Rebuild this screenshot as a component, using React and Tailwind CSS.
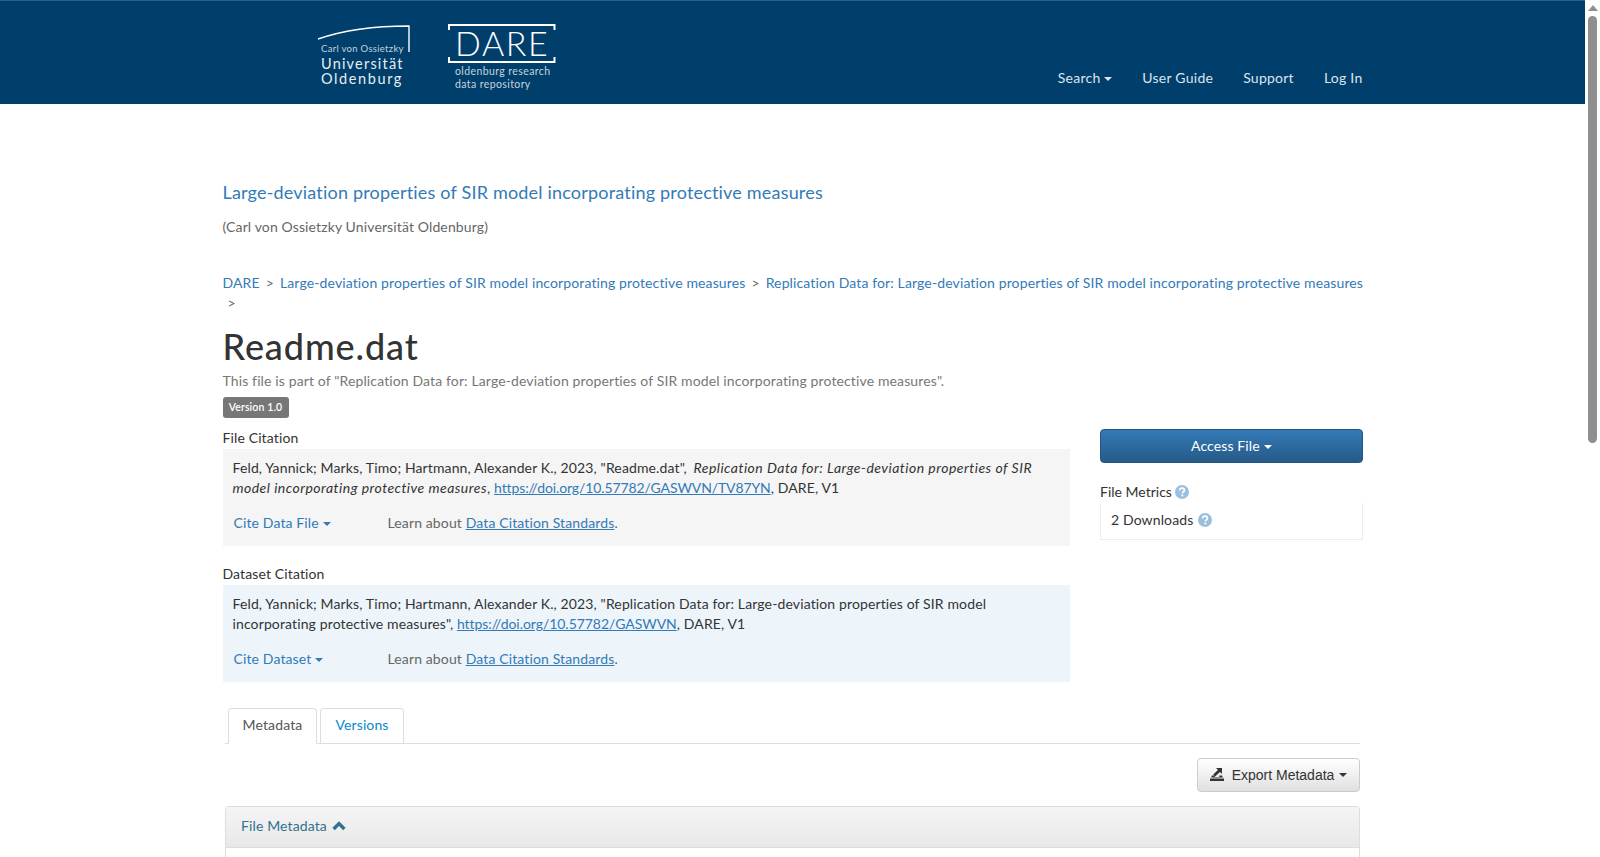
import React from "react";

const Caret = ({ className = "" }) => (
  <span className={"inline-block w-0 h-0 align-middle border-x-[4px] border-x-transparent border-t-[4px] border-t-current " + className} />
);

const Help = ({ className = "" }) => (
  <svg width="14" height="14" viewBox="0 0 14 14" className={"shrink-0 " + className}>
    <circle cx="7" cy="7" r="7" fill="#9bbfdf" />
    <path d="M4.6 5.4C4.7 3.9 5.7 3.2 7 3.2c1.4 0 2.4.8 2.4 2 0 1-.6 1.5-1.2 1.9-.5.3-.7.6-.7 1.2" fill="none" stroke="#fff" strokeWidth="1.7" />
    <rect x="6.4" y="9.4" width="1.9" height="1.9" fill="#fff" />
  </svg>
);

function Logo() {
  return (
    <svg width="245" height="72" viewBox="0 0 245 72" className="block">
      <g fill="none" stroke="#fff">
        <path d="M1 16 C 30 6, 60 3, 92 3 L92 29" strokeWidth="1.4" />
        <path d="M132 7 V2 H237.5 V7 M132 34 V39 H237.5 V34" strokeWidth="2" />
      </g>
      <g fill="#e8eef3" fontFamily="Lato, sans-serif">
        <text x="4" y="29" fontSize="9.5" letterSpacing="0.3" fillOpacity="0.85">Carl von Ossietzky</text>
        <text x="4" y="46" fontSize="14.5" letterSpacing="1.2">Universität</text>
        <text x="4" y="61" fontSize="14.5" letterSpacing="1.6">Oldenburg</text>
        <text x="138" y="33" fontSize="34" letterSpacing="1.6" fill="#fff" fontWeight="300">DARE</text>
        <text x="138" y="52" fontSize="10.5" letterSpacing="0.4" fillOpacity="0.85">oldenburg research</text>
        <text x="138" y="65" fontSize="10.5" letterSpacing="0.4" fillOpacity="0.85">data repository</text>
      </g>
    </svg>
  );
}

function Citation({ bg, label, text, cite }) {
  return (
    <div>
      <div className="h-[21px] text-[#333]">{label}</div>
      <div className={"h-[97px] pt-[9px] px-[10px] text-[#333] " + bg}>
        <div>{text}</div>
        <div className="flex mt-[15px]">
          <a className="w-[155px] pl-[1px] text-[#337ab7]">{cite} <Caret /></a>
          <span className="text-[#666]">Learn about <a className="text-[#337ab7] underline">Data Citation Standards</a>.</span>
        </div>
      </div>
    </div>
  );
}

export default function App() {
  return (
    <div className="flex h-[857px] overflow-hidden bg-white text-[14px] leading-[20px] tracking-[0.009em] font-['Lato','Noto_Sans',sans-serif]">
      <div className="w-[1585px] shrink-0 overflow-hidden">
        <header className="h-[104px] bg-[#003f6b] border-t border-t-[#2a6284]">
          <div className="w-[1170px] mx-auto px-[15px] flex justify-between">
            <div className="ml-[94px] mt-[22px]"><Logo /></div>
            <nav className="flex gap-[30px] mt-[67px] h-[20px] text-[#dde5eb] tracking-[0.018em]">
              <a>Search <Caret /></a>
              <a>User Guide</a>
              <a>Support</a>
              <a>Log In</a>
            </nav>
          </div>
        </header>

        <main className="w-[1170px] mx-auto px-[15px]">
          <a className="block mt-[78px] text-[18px] tracking-[0.0105em] text-[#337ab7]">Large-deviation properties of SIR model incorporating protective measures</a>
          <p className="mt-[15px] text-[#666]">(Carl von Ossietzky Universität Oldenburg)</p>

          <div className="mt-[36px]">
            <div className="flex whitespace-nowrap text-[#337ab7]">
              <a>DARE</a><span className="mx-[6px] text-[#666]">&gt;</span>
              <a>Large-deviation properties of SIR model incorporating protective measures</a><span className="mx-[6px] text-[#666]">&gt;</span>
              <a>Replication Data for: Large-deviation properties of SIR model incorporating protective measures</a>
            </div>
            <div className="pl-[5px] text-[#666]">&gt;</div>
          </div>

          <h1 className="mt-[13px] text-[36px] leading-[40px] font-medium tracking-[0.9px] text-[#333]">Readme.dat</h1>
          <p className="mt-[5px] text-[#777]">This file is part of "Replication Data for: Large-deviation properties of SIR model incorporating protective measures".</p>
          <span className="block w-[66px] h-[21px] mt-[6px] rounded-[3px] bg-[#777] text-white text-[10.5px] leading-[20px] font-semibold text-center">Version 1.0</span>

          <div className="flex gap-[30px] mt-[10px]">
            <div className="w-[847.5px] flex flex-col gap-[18px]">
              <Citation
                bg="bg-[#f5f5f5]"
                label="File Citation"
                cite="Cite Data File"
                text={<>Feld, Yannick; Marks, Timo; Hartmann, Alexander K., 2023, "Readme.dat", <em className="ml-[3px] tracking-[0.034em]">Replication Data for: Large-deviation properties of SIR<br />model incorporating protective measures</em>, <a className="text-[#337ab7] underline tracking-[-0.008em]">https://doi.org/10.57782/GASWVN/TV87YN</a>, DARE, V1</>}
              />
              <Citation
                bg="bg-[#edf5fb]"
                label="Dataset Citation"
                cite="Cite Dataset"
                text={<>Feld, Yannick; Marks, Timo; Hartmann, Alexander K., 2023, "Replication Data for: Large-deviation properties of SIR model<br />incorporating protective measures", <a className="text-[#337ab7] underline tracking-[-0.003em]">https://doi.org/10.57782/GASWVN</a>, DARE, V1</>}
              />
            </div>
            <div className="w-[262.5px] pt-[1px]">
              <button className="block w-full h-[34px] rounded-[4px] border border-[#245580] bg-gradient-to-b from-[#337ab7] to-[#265a88] text-white text-center">Access File <Caret /></button>
              <div className="mt-[19px] flex items-center h-[20px] text-[#333] tracking-normal">File Metrics <Help className="ml-[3px] -mt-[1px]" /></div>
              <div className="mt-[1px] h-[37px] pb-[3px] flex items-center px-[10px] border-x border-b border-[#eeeeee] text-[#333]">2 Downloads <Help className="ml-[5px]" /></div>
            </div>
          </div>

          <div className="mt-[26px] mx-[2.5px] flex gap-[3px] h-[36px] border-b border-[#dddddd] pl-[3px]">
            <a className="w-[89px] h-[36px] pb-[2px] flex items-center justify-center bg-white border border-[#dddddd] border-b-white rounded-t-[4px] text-[#555]">Metadata</a>
            <a className="w-[84px] h-[35px] pb-[2px] flex items-center justify-center border border-[#dddddd] border-b-0 rounded-t-[4px] text-[#0a89cc]">Versions</a>
          </div>

          <div className="mx-[2.5px] mt-[14px] flex justify-end">
            <button className="w-[163px] h-[34px] flex items-center justify-center rounded-[4px] border border-[#cccccc] bg-gradient-to-b from-white to-[#e0e0e0] text-[#333] tracking-normal font-['Liberation_Sans',sans-serif]">
              <svg width="14" height="14" viewBox="0 0 14 14" className="mr-[8px] -mt-[2px] fill-[#333]">
                <path d="M0 11.5h14V14H0zM2 8.6h3.2l-.5 1.4H9.3V8.6H12l1 2H1zM3.2 7.6 8 3 6 1h6v6L10 5 5.3 9.2z" />
              </svg>
              Export Metadata <Caret className="ml-[5px]" />
            </button>
          </div>

          <section className="mx-[2.5px] mt-[14px] h-[60px] border-x border-t border-[#dddddd] rounded-t-[4px]">
            <div className="h-[41px] pb-[2px] flex items-center px-[15px] border-b border-[#dddddd] bg-gradient-to-b from-[#f5f5f5] to-[#e8e8e8] text-[#31708f]">
              File Metadata
              <svg width="14" height="10" viewBox="0 0 14 10" className="ml-[5px]">
                <path d="M1.6 8 7 2.6 12.4 8" fill="none" stroke="currentColor" strokeWidth="3.4" />
              </svg>
            </div>
          </section>
        </main>
      </div>

      <div className="w-[15px] shrink-0 flex flex-col items-center bg-white">
        <div className="mt-[5px] w-0 h-0 border-x-[5px] border-x-transparent border-b-[6px] border-b-[#8f8f8f]" />
        <div className="mt-[5px] w-[9px] h-[427px] rounded-[5px] bg-[#8f8f8f]" />
      </div>
    </div>
  );
}
